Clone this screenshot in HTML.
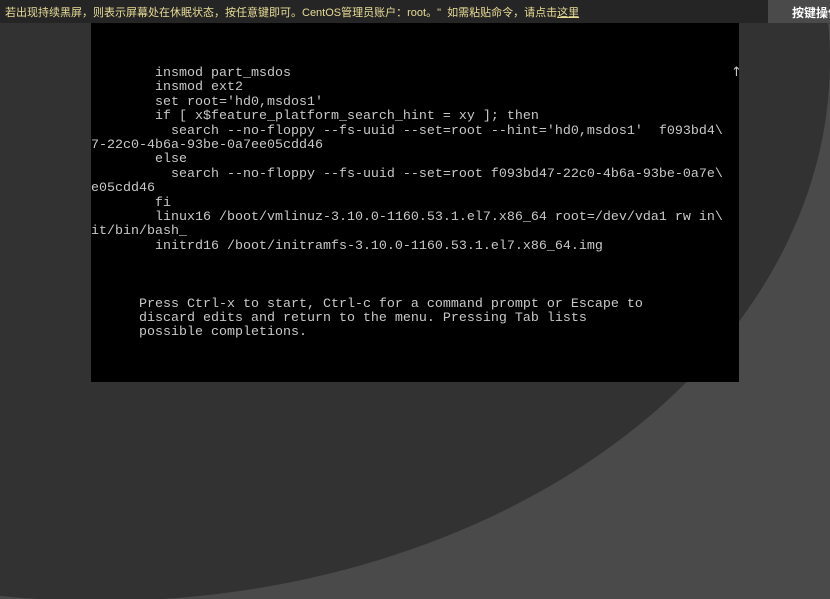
<!DOCTYPE html>
<html><head><meta charset="utf-8"><style>
html,body{margin:0;padding:0;width:830px;height:599px;overflow:hidden;background:#4a4a4a;position:relative;font-family:"Liberation Sans","Noto Sans CJK SC",sans-serif}
.ell{position:absolute;left:-630px;top:-481px;width:1460px;height:1082px;border-radius:50%;background:#323232}
.bar{position:absolute;left:0;top:0;width:830px;height:23px;background:#252525}
.msg{position:absolute;left:5px;top:4px;font-size:11px;color:#e8dc96;white-space:nowrap}
.msg u{text-decoration:underline}
.btn{position:absolute;left:768px;top:0;width:62px;height:23px;background:#4a4a4a;overflow:hidden}
.btn span{position:absolute;left:24px;top:4px;font-size:12px;font-weight:bold;color:#fff;white-space:nowrap}
.con{position:absolute;left:91px;top:23px;width:648px;height:359px;background:#000;overflow:hidden}
pre{margin:0;position:absolute;left:0;top:44px;font-family:"Liberation Mono",monospace;font-size:13.33px;line-height:14.4px;color:#c8c8c8}
.arr{position:absolute;left:640px;top:42px;font-size:13px;color:#c8c8c8;font-family:"DejaVu Sans",sans-serif}
</style></head><body>
<div class="ell"></div>
<div class="bar"><div class="msg">若出现持续黑屏，则表示屏幕处在休眠状态，按任意键即可。CentOS管理员账户：root。"&nbsp; 如需粘贴命令，请点击<u>这里</u></div>
<div class="btn"><span>按键操作</span></div></div>
<div class="con"><div class="arr">↑</div><pre>        insmod part_msdos
        insmod ext2
        set root='hd0,msdos1'
        if [ x$feature_platform_search_hint = xy ]; then
          search --no-floppy --fs-uuid --set=root --hint='hd0,msdos1'  f093bd4\
7-22c0-4b6a-93be-0a7ee05cdd46
        else
          search --no-floppy --fs-uuid --set=root f093bd47-22c0-4b6a-93be-0a7e\
e05cdd46
        fi
        linux16 /boot/vmlinuz-3.10.0-1160.53.1.el7.x86_64 root=/dev/vda1 rw in\
it/bin/bash_
        initrd16 /boot/initramfs-3.10.0-1160.53.1.el7.x86_64.img



      Press Ctrl-x to start, Ctrl-c for a command prompt or Escape to
      discard edits and return to the menu. Pressing Tab lists
      possible completions.</pre></div>
</body></html>
